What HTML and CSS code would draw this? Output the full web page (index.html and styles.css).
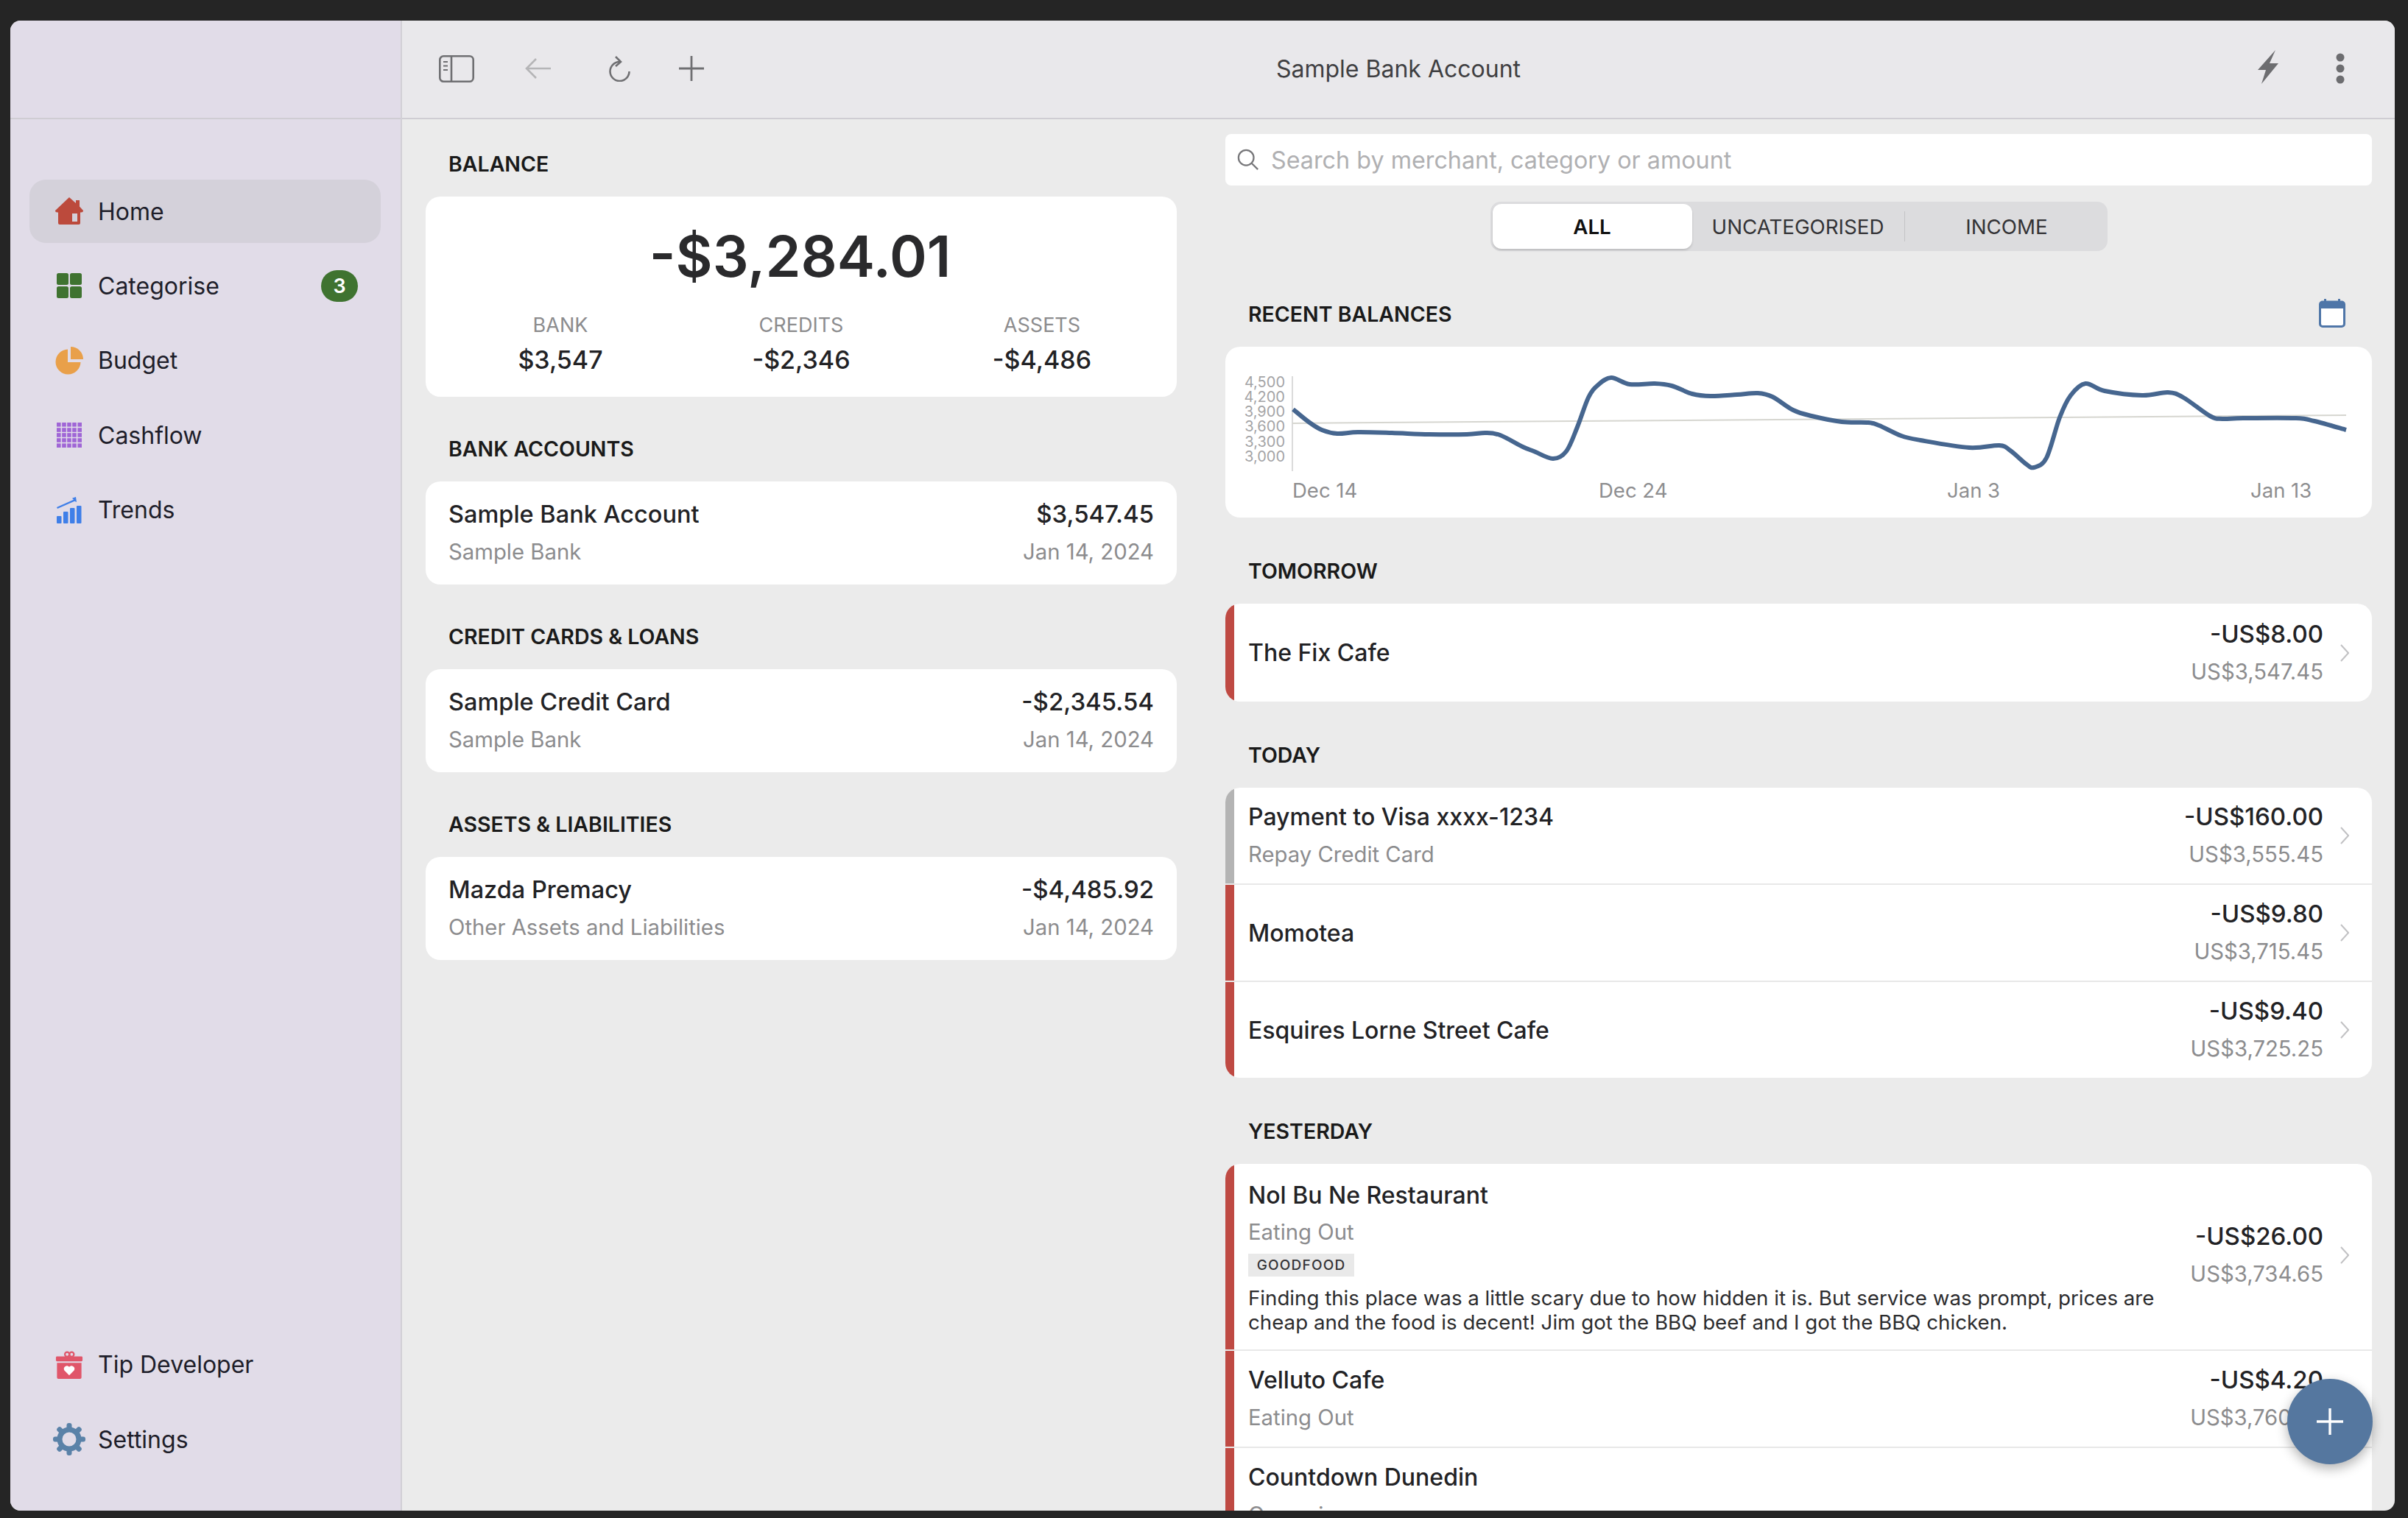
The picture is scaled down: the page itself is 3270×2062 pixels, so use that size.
FILE: index.html
```html
<!DOCTYPE html>
<html lang="en">
<head>
  <meta charset="UTF-8">
  <title>Sample Bank Account</title>
  <link rel="stylesheet" href="styles.css">
</head>
<body>
  <div class="window">
    <aside class="sidebar">
      <div class="sidebar-top"></div>
      <nav class="nav">
        <a href="#" class="nav-item active">
          <svg class="nav-icon" viewBox="0 0 38 38"><path d="M19 0 L28 8 V4 H33 V12.5 L38 18 Q38 20.5 35 20.5 H34 V35 Q34 37 32 37 H6 Q4 37 4 35 V20.5 H3 Q0 20.5 0 18 Z" fill="#bc4a3c"/><rect x="23" y="22" width="7" height="11" fill="#d4d1da"/></svg>
          <span>Home</span>
        </a>
        <a href="#" class="nav-item">
          <svg class="nav-icon" viewBox="0 0 38 38"><g fill="#3f7330"><rect x="2" y="2" width="16" height="16" rx="2.5"/><rect x="20" y="2" width="16" height="16" rx="2.5"/><rect x="2" y="20" width="16" height="16" rx="2.5"/><rect x="20" y="20" width="16" height="16" rx="2.5"/></g></svg>
          <span>Categorise</span>
          <span class="badge">3</span>
        </a>
        <a href="#" class="nav-item">
          <svg class="nav-icon" viewBox="0 0 38 38"><g fill="#e9a04a"><path d="M17 3.5 V21 H34.5 A17 17 0 1 1 17 3.5 Z"/><path d="M21 0 A17 17 0 0 1 38 17 H21 Z"/></g></svg>
          <span>Budget</span>
        </a>
        <a href="#" class="nav-item">
          <svg class="nav-icon" viewBox="0 0 38 38">
            <g fill="#a066d6">
              <rect x="2" y="2" width="5.6" height="5.6"/><rect x="9.2" y="2" width="5.6" height="5.6"/><rect x="16.2" y="2" width="5.6" height="5.6"/><rect x="23.2" y="2" width="5.6" height="5.6"/><rect x="30.4" y="2" width="5.6" height="5.6"/>
              <rect x="2" y="9.2" width="5.6" height="5.6"/><rect x="9.2" y="9.2" width="5.6" height="5.6"/><rect x="16.2" y="9.2" width="5.6" height="5.6"/><rect x="23.2" y="9.2" width="5.6" height="5.6"/><rect x="30.4" y="9.2" width="5.6" height="5.6"/>
              <rect x="2" y="16.2" width="5.6" height="5.6"/><rect x="9.2" y="16.2" width="5.6" height="5.6"/><rect x="16.2" y="16.2" width="5.6" height="5.6"/><rect x="23.2" y="16.2" width="5.6" height="5.6"/><rect x="30.4" y="16.2" width="5.6" height="5.6"/>
              <rect x="2" y="23.2" width="5.6" height="5.6"/><rect x="9.2" y="23.2" width="5.6" height="5.6"/><rect x="16.2" y="23.2" width="5.6" height="5.6"/><rect x="23.2" y="23.2" width="5.6" height="5.6"/><rect x="30.4" y="23.2" width="5.6" height="5.6"/>
              <rect x="2" y="30.4" width="5.6" height="5.6"/><rect x="9.2" y="30.4" width="5.6" height="5.6"/><rect x="16.2" y="30.4" width="5.6" height="5.6"/><rect x="23.2" y="30.4" width="5.6" height="5.6"/><rect x="30.4" y="30.4" width="5.6" height="5.6"/>
            </g>
          </svg>
          <span>Cashflow</span>
        </a>
        <a href="#" class="nav-item">
          <svg class="nav-icon" viewBox="0 0 38 38">
            <g fill="#3f7fe8">
              <rect x="2" y="27" width="6.5" height="10" rx="1"/><rect x="11" y="21" width="6.5" height="16" rx="1"/><rect x="20" y="16" width="6.5" height="21" rx="1"/><rect x="29" y="13" width="6.5" height="24" rx="1"/>
              <path d="M28 1 L29 8 L26.3 6.8 L3 17 L2 15 L25 4.8 L23 2.8 Z"/>
            </g>
          </svg>
          <span>Trends</span>
        </a>
      </nav>
      <nav class="nav nav-bottom">
        <a href="#" class="nav-item">
          <svg class="nav-icon" viewBox="0 0 38 40">
            <circle cx="16" cy="5" r="3.2" fill="none" stroke="#e0566a" stroke-width="2.4"/>
            <circle cx="22.5" cy="5" r="3.2" fill="none" stroke="#e0566a" stroke-width="2.4"/>
            <rect x="0" y="8" width="38" height="7" rx="1.5" fill="#e0566a"/>
            <path d="M1.5 17 H36.5 V38 Q36.5 40 34.5 40 H3.5 Q1.5 40 1.5 38 Z" fill="#e0566a"/>
            <path d="M19 35 L11.8 27.5 A4.3 4.3 0 0 1 19 23 A4.3 4.3 0 0 1 26.2 27.5 Z" fill="#fff"/>
          </svg>
          <span>Tip Developer</span>
        </a>
        <a href="#" class="nav-item">
          <svg class="nav-icon nav-icon-gear" viewBox="0 0 44 44">
            <g fill="#5a82a8">
              <rect x="18.5" y="0" width="7" height="44" rx="3"/>
              <rect x="18.5" y="0" width="7" height="44" rx="3" transform="rotate(45 22 22)"/>
              <rect x="18.5" y="0" width="7" height="44" rx="3" transform="rotate(90 22 22)"/>
              <rect x="18.5" y="0" width="7" height="44" rx="3" transform="rotate(135 22 22)"/>
            </g>
            <circle cx="22" cy="22" r="13" fill="#e1dce8" stroke="#5a82a8" stroke-width="7"/>
          </svg>
          <span>Settings</span>
        </a>
      </nav>
    </aside>

    <main class="main">
      <header class="toolbar">
        <div class="toolbar-left">
          <svg class="tool-sidebar" viewBox="0 0 48 37" fill="none" stroke="#6f6f72" stroke-width="2.6"><rect x="1.3" y="1.3" width="45.4" height="34.4" rx="5"/><path d="M17 1.3 V35.7"/><path d="M6 9 H12 M6 14.5 H12 M6 20 H12" stroke-width="1.8"/></svg>
          <svg class="tool-back" viewBox="0 0 35 28" fill="none" stroke="#b5b5b7" stroke-width="2.6"><path d="M35 14 H2 M15 1 L2 14 L15 27"/></svg>
          <svg class="tool-reload" viewBox="0 0 30 35" fill="none" stroke="#6f6f72" stroke-width="2.6"><path d="M14 8 A13 13 0 1 0 27.5 21"/><path d="M9 1 L16 8 L9 14"/></svg>
          <svg class="tool-plus" viewBox="0 0 34 34" fill="none" stroke="#6f6f72" stroke-width="2.8"><path d="M17 0 V34 M0 17 H34"/></svg>
        </div>
        <div class="toolbar-title">Sample Bank Account</div>
        <div class="toolbar-right">
          <svg class="tool-bolt" viewBox="0 0 32 46"><path d="M26 0 L2 27 H13 L7 46 L30 18 H18 Z" fill="#6d6d70"/></svg>
          <svg class="tool-more" viewBox="0 0 12 42"><g fill="#6d6d70"><circle cx="6" cy="6" r="5.5"/><circle cx="6" cy="21" r="5.5"/><circle cx="6" cy="36" r="5.5"/></g></svg>
        </div>
      </header>

      <div class="content">
        <section class="col-left">
          <h3 class="section-title first">BALANCE</h3>
          <div class="card balance-card">
            <div class="balance-total">-$3,284.01</div>
            <div class="balance-split">
              <div><div class="split-label">BANK</div><div class="split-value">$3,547</div></div>
              <div><div class="split-label">CREDITS</div><div class="split-value">-$2,346</div></div>
              <div><div class="split-label">ASSETS</div><div class="split-value">-$4,486</div></div>
            </div>
          </div>

          <h3 class="section-title">BANK ACCOUNTS</h3>
          <div class="card account">
            <div class="account-line"><span class="name">Sample Bank Account</span><span class="name">$3,547.45</span></div>
            <div class="account-line"><span class="sub">Sample Bank</span><span class="sub">Jan 14, 2024</span></div>
          </div>

          <h3 class="section-title">CREDIT CARDS &amp; LOANS</h3>
          <div class="card account">
            <div class="account-line"><span class="name">Sample Credit Card</span><span class="name">-$2,345.54</span></div>
            <div class="account-line"><span class="sub">Sample Bank</span><span class="sub">Jan 14, 2024</span></div>
          </div>

          <h3 class="section-title">ASSETS &amp; LIABILITIES</h3>
          <div class="card account">
            <div class="account-line"><span class="name">Mazda Premacy</span><span class="name">-$4,485.92</span></div>
            <div class="account-line"><span class="sub">Other Assets and Liabilities</span><span class="sub">Jan 14, 2024</span></div>
          </div>
        </section>

        <section class="col-right">
          <div class="search">
            <svg class="search-icon" viewBox="0 0 32 32" fill="none" stroke="#77777a" stroke-width="2.4"><circle cx="13" cy="13" r="11"/><path d="M21 21 L30 30"/></svg>
            <span>Search by merchant, category or amount</span>
          </div>
          <div class="segments">
            <div class="segment selected">ALL</div>
            <div class="segment">UNCATEGORISED</div>
            <div class="segment divided">INCOME</div>
          </div>

          <div class="section-head">
            <h3 class="section-title">RECENT BALANCES</h3>
            <svg class="calendar" viewBox="0 0 36 39"><rect x="1.5" y="4" width="33" height="33.5" rx="3.5" fill="#fff" stroke="#4f76a8" stroke-width="3"/><path d="M1.5 13 V7.5 Q1.5 4 5 4 H31 Q34.5 4 34.5 7.5 V13 Z" fill="#4f76a8"/><rect x="7" y="0" width="3" height="6" fill="#4f76a8"/><rect x="26" y="0" width="3" height="6" fill="#4f76a8"/></svg>
          </div>
          <div class="card chart-card">
            <svg class="chart" viewBox="0 0 1557 232">
              <line class="chart-axis" x1="91" y1="40" x2="91" y2="169"/>
              <line class="chart-trend" x1="91" y1="104" x2="1522" y2="93"/>
              <path id="balance-line" class="chart-line" d=""/>
              <g class="chart-y">
                <text x="81" y="55">4,500</text>
                <text x="81" y="75">4,200</text>
                <text x="81" y="95">3,900</text>
                <text x="81" y="115">3,600</text>
                <text x="81" y="136">3,300</text>
                <text x="81" y="156">3,000</text>
              </g>
              <g class="chart-x">
                <text x="91" y="205">Dec 14</text>
                <text x="507" y="205">Dec 24</text>
                <text x="980" y="205">Jan 3</text>
                <text x="1392" y="205">Jan 13</text>
              </g>
            </svg>
          </div>

          <h3 class="section-title">TOMORROW</h3>
          <div class="card tx-list">
            <div class="tx tx-single">
              <div class="tx-main"><div class="name">The Fix Cafe</div></div>
              <div class="tx-amount"><div class="name">-US$8.00</div><div class="sub">US$3,547.45</div></div>
              <svg class="chevron" viewBox="0 0 12 24"><path d="M1 1 L11 12 L1 23"/></svg>
            </div>
          </div>

          <h3 class="section-title">TODAY</h3>
          <div class="card tx-list">
            <div class="tx tx-transfer">
              <div class="tx-main"><div class="name">Payment to Visa xxxx-1234</div><div class="sub">Repay Credit Card</div></div>
              <div class="tx-amount"><div class="name">-US$160.00</div><div class="sub">US$3,555.45</div></div>
              <svg class="chevron" viewBox="0 0 12 24"><path d="M1 1 L11 12 L1 23"/></svg>
            </div>
            <div class="tx">
              <div class="tx-main"><div class="name">Momotea</div></div>
              <div class="tx-amount"><div class="name">-US$9.80</div><div class="sub">US$3,715.45</div></div>
              <svg class="chevron" viewBox="0 0 12 24"><path d="M1 1 L11 12 L1 23"/></svg>
            </div>
            <div class="tx">
              <div class="tx-main"><div class="name">Esquires Lorne Street Cafe</div></div>
              <div class="tx-amount"><div class="name">-US$9.40</div><div class="sub">US$3,725.25</div></div>
              <svg class="chevron" viewBox="0 0 12 24"><path d="M1 1 L11 12 L1 23"/></svg>
            </div>
          </div>

          <h3 class="section-title">YESTERDAY</h3>
          <div class="card tx-list">
            <div class="tx tx-long">
              <div class="tx-main">
                <div class="name">Nol Bu Ne Restaurant</div>
                <div class="sub">Eating Out</div>
                <div class="tag">GOODFOOD</div>
                <div class="note">Finding this place was a little scary due to how hidden it is. But service was prompt, prices are cheap and the food is decent! Jim got the BBQ beef and I got the BBQ chicken.</div>
              </div>
              <div class="tx-amount"><div class="name">-US$26.00</div><div class="sub">US$3,734.65</div></div>
              <svg class="chevron" viewBox="0 0 12 24"><path d="M1 1 L11 12 L1 23"/></svg>
            </div>
            <div class="tx">
              <div class="tx-main"><div class="name">Velluto Cafe</div><div class="sub">Eating Out</div></div>
              <div class="tx-amount"><div class="name">-US$4.20</div><div class="sub">US$3,760.05</div></div>
              <svg class="chevron" viewBox="0 0 12 24"><path d="M1 1 L11 12 L1 23"/></svg>
            </div>
            <div class="tx">
              <div class="tx-main"><div class="name">Countdown Dunedin</div><div class="sub">Groceries</div></div>
            </div>
          </div>
        </section>
      </div>

      <button class="fab">
        <svg viewBox="0 0 36 36" fill="none" stroke="#fff" stroke-width="3.4"><path d="M18 0 V36 M0 18 H36"/></svg>
      </button>
    </main>
  </div>
  <script src="chart.js"></script>
</body>
</html>
```

FILE: styles.css
```css
* {
  box-sizing: border-box;
}

html,
body {
  height: 100%;
  margin: 0;
  overflow: hidden;
}

body {
  font-family: "Inter", "Liberation Sans", sans-serif;
  background: #252525;
  color: #1e1e22;
  padding: 28px 18px 10px 14px;
}

.window {
  display: flex;
  height: 100%;
  border-radius: 14px;
  overflow: hidden;
  background: #ebebeb;
}

/* sidebar */
.sidebar {
  width: 532px;
  flex-shrink: 0;
  display: flex;
  flex-direction: column;
  background: #e1dce8;
  border-right: 2px solid #d2d0d6;
}

.sidebar-top {
  height: 134px;
  border-bottom: 2px solid #cfcdd3;
}

.nav {
  display: flex;
  flex-direction: column;
  gap: 15.4px;
  padding: 82px 27px 0 26px;
}

.nav-bottom {
  margin-top: auto;
  padding-top: 0;
  padding-bottom: 54px;
}

.nav-item {
  display: flex;
  align-items: center;
  height: 86px;
  padding: 0 31px 0 35px;
  border-radius: 22px;
  font-size: 32px;
  color: #1e1e2a;
  text-decoration: none;
}

.nav-item.active {
  background: #d4d1da;
}

.nav-icon {
  width: 38px;
  height: 38px;
  margin-right: 20px;
  flex-shrink: 0;
}

.nav-icon-gear {
  width: 44px;
  height: 44px;
  margin: 0 17px 0 -3px;
}

.badge {
  margin-left: auto;
  width: 50px;
  height: 43px;
  border-radius: 22px;
  background: #3f7330;
  color: #fff;
  font-size: 27px;
  font-weight: 600;
  display: flex;
  align-items: center;
  justify-content: center;
}

/* toolbar */
.main {
  flex: 1;
  min-width: 0;
  display: flex;
  flex-direction: column;
  position: relative;
}

.toolbar {
  height: 134px;
  flex-shrink: 0;
  display: grid;
  grid-template-columns: 1fr auto 1fr;
  align-items: center;
  padding: 0 50px 2px 50px;
  background: #e9e8eb;
  border-bottom: 2px solid #cfcdd3;
}

.toolbar-left {
  display: flex;
  align-items: center;
}

.toolbar-right {
  display: flex;
  align-items: center;
  justify-content: flex-end;
  gap: 76px;
  margin-right: 18px;
}

.toolbar-title {
  font-size: 32px;
  color: #3f3f42;
}

.tool-sidebar {
  width: 48px;
  height: 37px;
  margin-right: 69px;
}

.tool-back {
  width: 35px;
  height: 28px;
  margin-right: 79px;
}

.tool-reload {
  width: 30px;
  height: 35px;
  margin-right: 65px;
}

.tool-plus {
  width: 34px;
  height: 34px;
}

.tool-bolt {
  width: 32px;
  height: 46px;
  margin-bottom: 4px;
}

.tool-more {
  width: 12px;
  height: 42px;
}

/* content */
.content {
  flex: 1;
  min-height: 0;
  display: flex;
  gap: 66px;
  padding: 20px 31px 0 32px;
  overflow: hidden;
}

.col-left {
  width: 1020px;
  flex-shrink: 0;
}

.col-right {
  flex: 1;
  min-width: 0;
}

.section-title {
  height: 44px;
  line-height: 44px;
  margin: 49px 0 22px 0;
  padding-left: 31px;
  font-size: 28.5px;
  font-weight: 600;
  color: #1a1a1a;
}

.section-title.first {
  margin-top: 19px;
}

.col-right .section-title {
  margin-top: 51px;
}

.card {
  background: #fff;
  border-radius: 20px;
}

.name {
  font-size: 32px;
  font-weight: 500;
  line-height: 51px;
  color: #222225;
}

.sub {
  font-size: 29.3px;
  line-height: 51px;
  color: #8c8c8e;
}

/* balance */
.balance-card {
  height: 272px;
  text-align: center;
}

.balance-total {
  padding-top: 35px;
  margin-left: -3px;
  font-size: 77px;
  font-weight: 600;
  line-height: 92px;
  color: #2a2a2c;
}

.balance-split {
  display: flex;
  justify-content: space-between;
  padding: 26px 20px 0 20px;
}

.balance-split > div {
  width: 326px;
}

.split-label {
  font-size: 27px;
  line-height: 44px;
  color: #8c8c8e;
}

.split-value {
  font-size: 34px;
  font-weight: 500;
  line-height: 50px;
  color: #222225;
}

.account {
  height: 140px;
  padding: 19px 31px 0 31px;
}

.account-line {
  display: flex;
  justify-content: space-between;
}

.account-line .name {
  font-size: 32.5px;
}

.account-line .name:last-child {
  font-size: 33px;
}

/* search and filter */
.search {
  display: flex;
  align-items: center;
  height: 70px;
  padding-left: 14px;
  background: #fff;
  border-radius: 8px;
  font-size: 32.3px;
  color: #b0b0b2;
}

.search-icon {
  width: 34px;
  height: 30px;
  margin-right: 14px;
}

.segments {
  display: grid;
  grid-template-columns: 271px 288px 279px;
  width: 838px;
  height: 67px;
  margin: 22px auto 0 auto;
  padding: 3px;
  background: #dcdcde;
  border-radius: 14px;
  font-size: 27.7px;
  color: #333336;
}

.segment {
  display: flex;
  align-items: center;
  justify-content: center;
}

.segment.selected {
  background: #fff;
  border-radius: 12px;
  font-weight: 600;
  color: #111;
  box-shadow: 0 2px 3px rgba(0, 0, 0, 0.15);
}

.segment.divided {
  position: relative;
}

.segment.divided::before {
  content: "";
  position: absolute;
  left: 0;
  top: 10px;
  bottom: 10px;
  width: 1px;
  background: #c4c4c6;
}

.section-head {
  display: flex;
  align-items: center;
  justify-content: space-between;
  margin-top: 64px;
  margin-bottom: 22px;
  padding-right: 36px;
}

.col-right .section-head .section-title {
  margin: 0;
}

.calendar {
  width: 36px;
  height: 39px;
  margin-bottom: 3px;
}

/* chart */
.chart-card {
  height: 232px;
}

.chart {
  display: block;
  width: 100%;
  height: 100%;
}

.chart-axis {
  stroke: #cfcfcf;
  stroke-width: 1.5;
}

.chart-trend {
  stroke: #d6d6d0;
  stroke-width: 2;
}

.chart-line {
  fill: none;
  stroke: #46668f;
  stroke-width: 6;
  stroke-linejoin: round;
}

.chart-y text {
  font-size: 20px;
  fill: #a4a4a6;
  text-anchor: end;
}

.chart-x text {
  font-size: 27.5px;
  fill: #8e8e90;
}

/* transactions */
.tx-list {
  display: flex;
  flex-direction: column;
  gap: 2px;
  overflow: hidden;
  background: #e8e8e8;
}

.tx {
  display: flex;
  align-items: center;
  min-height: 130px;
  padding: 14px 31px 14px 19px;
  border-left: 12px solid #bf4a43;
  background: #fff;
}

.tx-single {
  min-height: 133px;
}

.tx-transfer {
  border-left-color: #b4b4b4;
}

.tx-long {
  height: 252px;
  padding-top: 15px;
  padding-bottom: 19px;
}

.tx-long .tx-main .sub {
  line-height: 49px;
}

.tx-main {
  flex: 1;
  min-width: 0;
}

.tx-amount {
  text-align: right;
  white-space: nowrap;
}

.tx-amount .name {
  font-size: 33px;
}

.chevron {
  width: 12px;
  height: 24px;
  margin-left: 23px;
  flex-shrink: 0;
  fill: none;
  stroke: #c2c2c4;
  stroke-width: 2;
}

.tag {
  width: 144px;
  height: 31px;
  margin-top: 5px;
  background: #e9e9e9;
  font-size: 19px;
  font-weight: 500;
  line-height: 31px;
  letter-spacing: 1.2px;
  text-align: center;
  color: #333336;
}

.note {
  width: 1250px;
  margin-top: 13px;
  font-size: 27.7px;
  line-height: 33px;
  color: #2c2c2e;
}

.fab {
  position: absolute;
  right: 30px;
  bottom: 63px;
  width: 116px;
  height: 116px;
  padding: 0;
  border: none;
  border-radius: 50%;
  background: #55779f;
  box-shadow: 0 6px 16px rgba(0, 0, 0, 0.3);
  display: flex;
  align-items: center;
  justify-content: center;
}

.fab svg {
  width: 36px;
  height: 36px;
}
```

FILE: chart.js
```js
const points = [
  [92, 85], [113, 102], [131, 113], [152, 118], [180, 116], [226, 117], [277, 119],
  [328, 119], [353, 117], [373, 120], [404, 136], [419, 142], [445, 152], [463, 142],
  [478, 109], [493, 69], [506, 52], [524, 42], [549, 51], [583, 50], [606, 53],
  [634, 64], [659, 67], [695, 65], [723, 63], [743, 68], [771, 86], [796, 94],
  [837, 102], [873, 103], [888, 107], [918, 121], [944, 127], [1010, 137], [1051, 134],
  [1066, 141], [1087, 159], [1098, 164], [1115, 151], [1133, 96], [1148, 66], [1168, 50],
  [1194, 60], [1245, 66], [1280, 62], [1301, 69], [1337, 94], [1354, 98], [1382, 97],
  [1454, 97], [1479, 101], [1522, 113]
];

// catmull-rom to bezier so the line comes out smooth
let d = `M${points[0][0]} ${points[0][1]}`;
for (let i = 0; i < points.length - 1; i++) {
  const p0 = points[i - 1] || points[i];
  const p1 = points[i];
  const p2 = points[i + 1];
  const p3 = points[i + 2] || p2;
  const c1x = p1[0] + (p2[0] - p0[0]) / 6;
  const c1y = p1[1] + (p2[1] - p0[1]) / 6;
  const c2x = p2[0] - (p3[0] - p1[0]) / 6;
  const c2y = p2[1] - (p3[1] - p1[1]) / 6;
  d += ` C${c1x} ${c1y} ${c2x} ${c2y} ${p2[0]} ${p2[1]}`;
}
document.getElementById('balance-line').setAttribute('d', d);
```
